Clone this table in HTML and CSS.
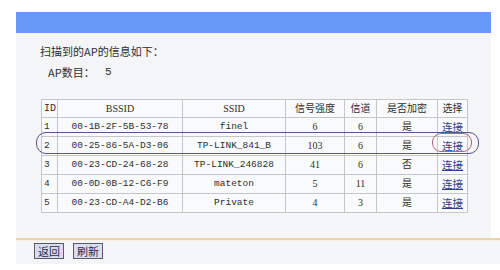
FILE: index.html
```html
<!DOCTYPE html>
<html>
<head>
<meta charset="utf-8">
<link rel="stylesheet" href="styles.css">
</head>
<body>
<div class="page">
  <div class="bar"></div>
  <div class="panel">
    <div class="title">扫描到的AP的信息如下：</div>
    <div class="count"><span class="count-label">AP数目：</span><span class="count-val">5</span></div>
    <div class="table-wrap">
      <table class="ap">
        <colgroup>
          <col style="width:16px"><col style="width:125px"><col style="width:103px"><col style="width:59px"><col style="width:32px"><col style="width:61px"><col style="width:30px">
        </colgroup>
        <tr class="head"><td>ID</td><td>BSSID</td><td>SSID</td><td>信号强度</td><td>信道</td><td>是否加密</td><td>选择</td></tr>
        <tr><td>1</td><td>00-1B-2F-5B-53-78</td><td>finel</td><td>6</td><td>6</td><td>是</td><td><a class="link">连接</a></td></tr>
        <tr><td>2</td><td>00-25-86-5A-D3-06</td><td>TP-LINK_841_B</td><td>103</td><td>6</td><td>是</td><td><a class="link">连接</a></td></tr>
        <tr><td>3</td><td>00-23-CD-24-68-28</td><td>TP-LINK_246828</td><td>41</td><td>6</td><td>否</td><td><a class="link">连接</a></td></tr>
        <tr><td>4</td><td>00-0D-0B-12-C6-F9</td><td>mateton</td><td>5</td><td>11</td><td>是</td><td><a class="link">连接</a></td></tr>
        <tr><td>5</td><td>00-23-CD-A4-D2-B6</td><td>Private</td><td>4</td><td>3</td><td>是</td><td><a class="link">连接</a></td></tr>
      </table>
      <div class="mark-row"></div>
      <div class="mark-link"></div>
    </div>
  </div>
  <div class="rule"></div>
  <div class="footer">
    <button class="btn">返回</button>
    <button class="btn">刷新</button>
  </div>
</div>
</body>
</html>
```
FILE: styles.css
```css
html, body {
  margin: 0;
  padding: 0;
  background: #ffffff;
}
body {
  width: 500px;
  height: 270px;
  overflow: hidden;
  font-family: "Noto Sans CJK SC", sans-serif;
  color: #333333;
}
.page {
  padding: 12px 0 0 16px;
}
.bar {
  width: 475px;
  height: 21px;
  background: #6699f8;
}
.panel {
  width: 475px;
  height: 205px;
  background: #f3f5f7;
  box-sizing: border-box;
  padding: 11px 0 0 24px;
}
.title {
  font-size: 11px;
  line-height: 14px;
  height: 14px;
  color: #2e2e2e;
}
.count {
  margin: 7px 0 0 8px;
  font-size: 11px;
  line-height: 14px;
  height: 14px;
  display: flex;
  color: #2e2e2e;
}
.count-label {
  width: 57px;
}
.count-val {
  font-family: "Liberation Mono", monospace;
}
.table-wrap {
  position: relative;
  margin: 20px 0 0 1px;
  width: 428px;
}
.ap {
  border-collapse: collapse;
  table-layout: fixed;
  width: 427px;
  background: #f9fafb;
  font-family: "Liberation Mono", "Noto Sans CJK SC", monospace;
  font-size: 9.5px;
  color: #2e2e2e;
}
.ap tr {
  height: 19px;
}
.ap tr.head {
  height: 18px;
}
.ap td {
  border: 1px solid #c4c6c8;
  padding: 0;
  text-align: center;
  line-height: 14px;
  white-space: nowrap;
  overflow: hidden;
}
.ap tr td:first-child {
  text-align: left;
  padding-left: 2px;
}
.ap .head td {
  font-family: "Liberation Serif", "Noto Sans CJK SC", serif;
  font-size: 10px;
}
.ap .head td:first-child {
  font-family: "Liberation Mono", monospace;
}
.ap td:nth-child(n+4) {
  font-family: "Liberation Serif", "Noto Sans CJK SC", serif;
  font-size: 10px;
}
.link {
  color: #2f3a8f;
  text-decoration: underline;
  font-family: "Noto Sans CJK SC", sans-serif;
  font-size: 10.5px;
}
.mark-row {
  position: absolute;
  left: -5px;
  top: 33px;
  width: 441px;
  height: 20px;
  border: 1px solid #5b5390;
  border-radius: 10px;
}
.mark-link {
  position: absolute;
  left: 391px;
  top: 34px;
  width: 38px;
  height: 17px;
  border: 1px solid #b8607a;
  border-radius: 9px;
}
.rule {
  width: 484px;
  height: 1px;
  border-top: 2px solid #ecd3ac;
  background: #f8efe2;
}
.footer {
  width: 484px;
  height: 23px;
  background: #f3f5f7;
  display: flex;
  gap: 9px;
  padding: 2px 0 0 18px;
  box-sizing: border-box;
}
.btn {
  font-family: "Noto Sans CJK SC", sans-serif;
  font-size: 11px;
  line-height: 13px;
  height: 16px;
  padding: 0 3px;
  margin: 0;
  background: #dcdcef;
  border: 1px solid #5a5a6a;
  border-radius: 0;
  color: #2a2a4a;
}
```
